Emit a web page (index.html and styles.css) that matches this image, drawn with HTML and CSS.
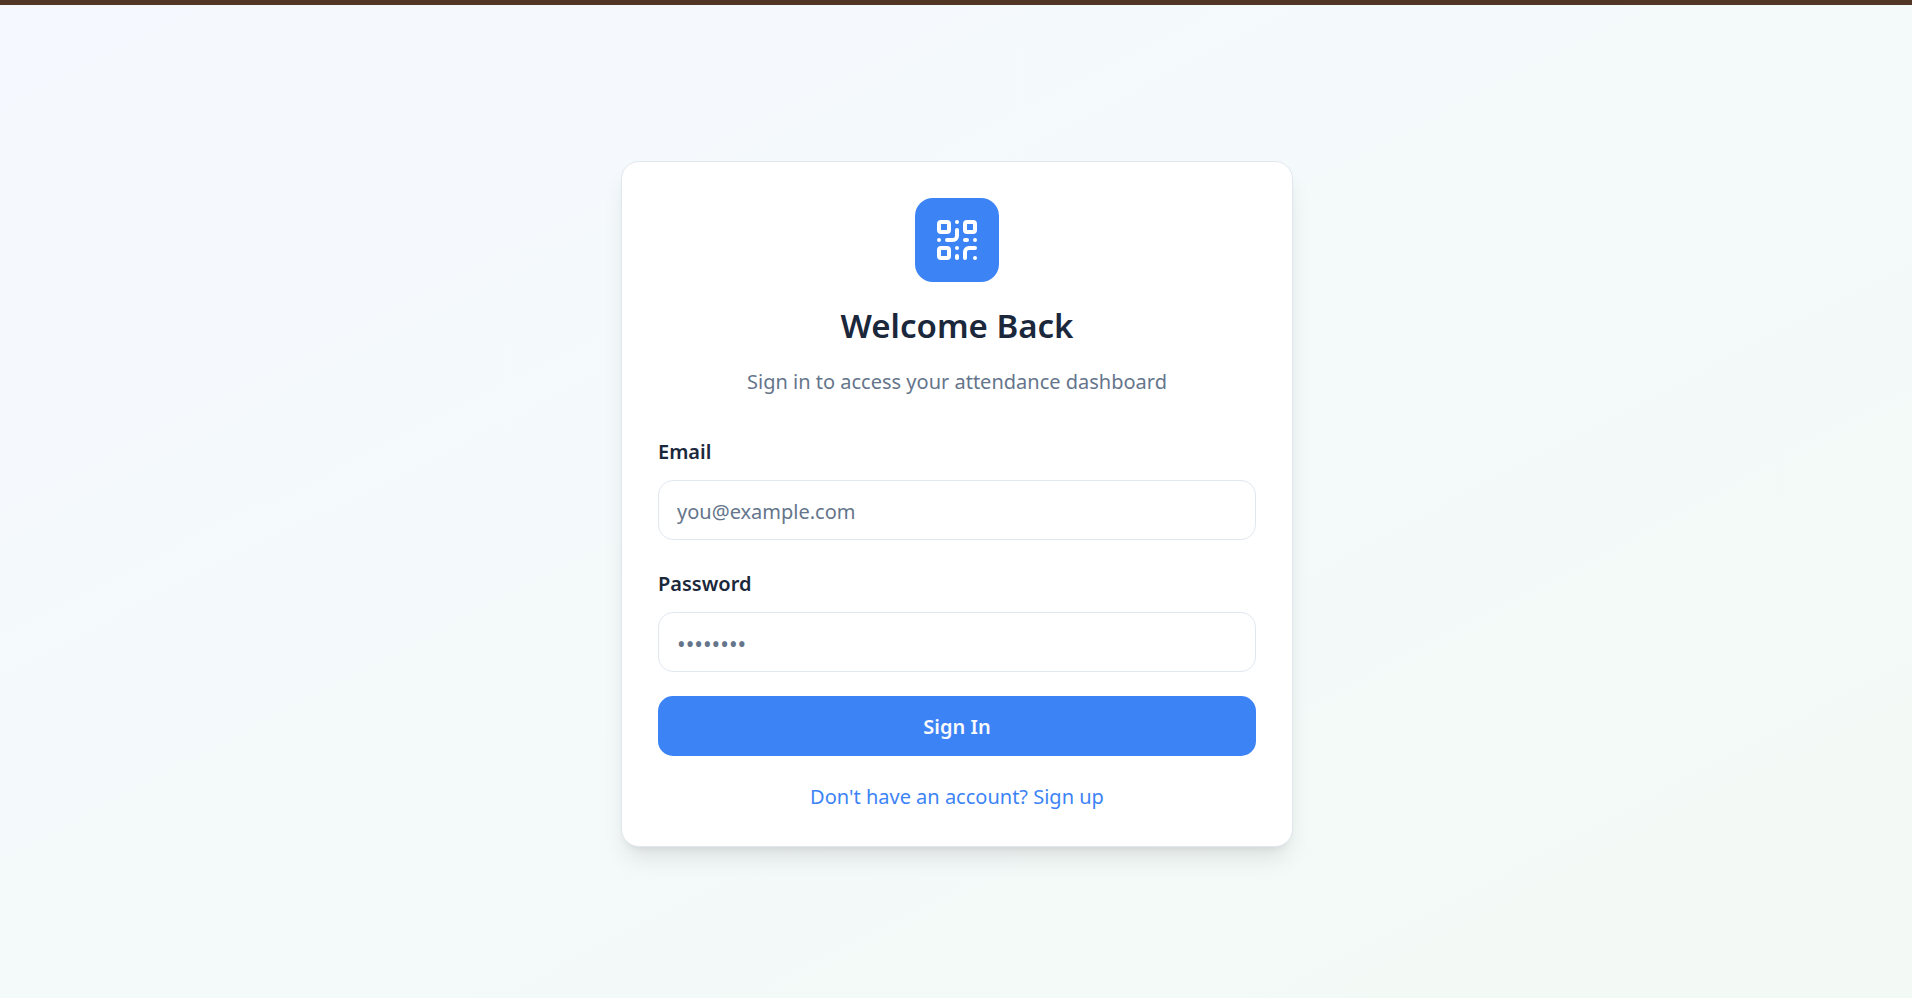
FILE: index.html
```html
<!DOCTYPE html>
<html lang="en">
<head>
<meta charset="utf-8">
<meta name="viewport" content="width=device-width, initial-scale=1">
<title>Sign In</title>
<link rel="stylesheet" href="styles.css">
</head>
<body>
<main class="page">
  <section class="card">
    <header class="card-header">
      <div class="logo">
        <svg viewBox="0 0 24 24" aria-hidden="true">
          <rect width="5" height="5" x="3" y="3" rx="1"/>
          <rect width="5" height="5" x="16" y="3" rx="1"/>
          <rect width="5" height="5" x="3" y="16" rx="1"/>
          <path d="M21 16h-3a2 2 0 0 0-2 2v3"/>
          <path d="M21 21v.01"/>
          <path d="M12 7v3a2 2 0 0 1-2 2H7"/>
          <path d="M3 12h.01"/>
          <path d="M12 3h.01"/>
          <path d="M12 16v.01"/>
          <path d="M16 12h1"/>
          <path d="M21 12v.01"/>
          <path d="M12 21v-1"/>
        </svg>
      </div>
      <h1 class="title">Welcome Back</h1>
      <p class="subtitle">Sign in to access your attendance dashboard</p>
    </header>
    <form class="form">
      <div class="field">
        <label class="label" for="email">Email</label>
        <input class="input" id="email" type="email" placeholder="you@example.com">
      </div>
      <div class="field">
        <label class="label" for="password">Password</label>
        <input class="input input-password" id="password" type="password" placeholder="••••••••">
      </div>
      <button class="submit" type="submit">Sign In</button>
    </form>
    <a class="switch" href="#signup">Don't have an account? Sign up</a>
  </section>
</main>
</body>
</html>
```
FILE: styles.css
```css
* {
  box-sizing: border-box;
}

body {
  margin: 0;
  font-family: "Segoe UI", "Noto Sans", sans-serif;
  font-size: 20px;
  line-height: 32px;
  color: #1b273b;
}

.page {
  display: flex;
  align-items: center;
  justify-content: center;
  min-height: 100vh;
  padding: 10px 24px 6px 26px;
  border-top: 5px solid #513625;
  background: linear-gradient(to bottom right, #f5f9ff, #f3faf5);
}

.card {
  display: flex;
  flex-direction: column;
  width: 100%;
  max-width: 672px;
  padding: 36px 36px 33px;
  border: 1px solid #e1e7ef;
  border-radius: 18px;
  background: #fff;
  box-shadow: 0 15px 23px -5px rgb(0 0 0 / 10%), 0 6px 9px -6px rgb(0 0 0 / 10%);
}

.card-header {
  display: flex;
  flex-direction: column;
  align-items: center;
  margin-bottom: 38px;
  text-align: center;
}

.logo {
  display: flex;
  align-items: center;
  justify-content: center;
  width: 84px;
  height: 84px;
  margin-bottom: 20px;
  border-radius: 18px;
  background: #3c83f6;
}

.logo svg {
  width: 48px;
  height: 48px;
  fill: none;
  stroke: #fff;
  stroke-width: 2;
  stroke-linecap: round;
  stroke-linejoin: round;
}

.title {
  margin: 0 0 16px;
  font-size: 33px;
  font-weight: 600;
  line-height: 48px;
}

.subtitle {
  margin: 0;
  color: #65758b;
}

.form {
  display: flex;
  flex-direction: column;
  gap: 24px;
}

.field {
  display: flex;
  flex-direction: column;
  gap: 12px;
}

.field + .field {
  margin-top: 4px;
}

.label {
  font-weight: 600;
}

.input {
  width: 100%;
  height: 60px;
  padding: 4px 18px 0;
  border: 1px solid #e1e7ef;
  border-radius: 15px;
  background: #fff;
  color: inherit;
  font: inherit;
}

.input-password {
  font-size: 23px;
}

.input::placeholder {
  color: #65758b;
  opacity: 1;
}

.submit {
  height: 60px;
  padding: 2px 24px 0;
  border: 0;
  border-radius: 15px;
  background: #3c83f6;
  color: #f8fafc;
  font: inherit;
  font-weight: 600;
}

.switch {
  align-self: center;
  margin-top: 25px;
  color: #3c83f6;
  text-decoration: none;
}
```
